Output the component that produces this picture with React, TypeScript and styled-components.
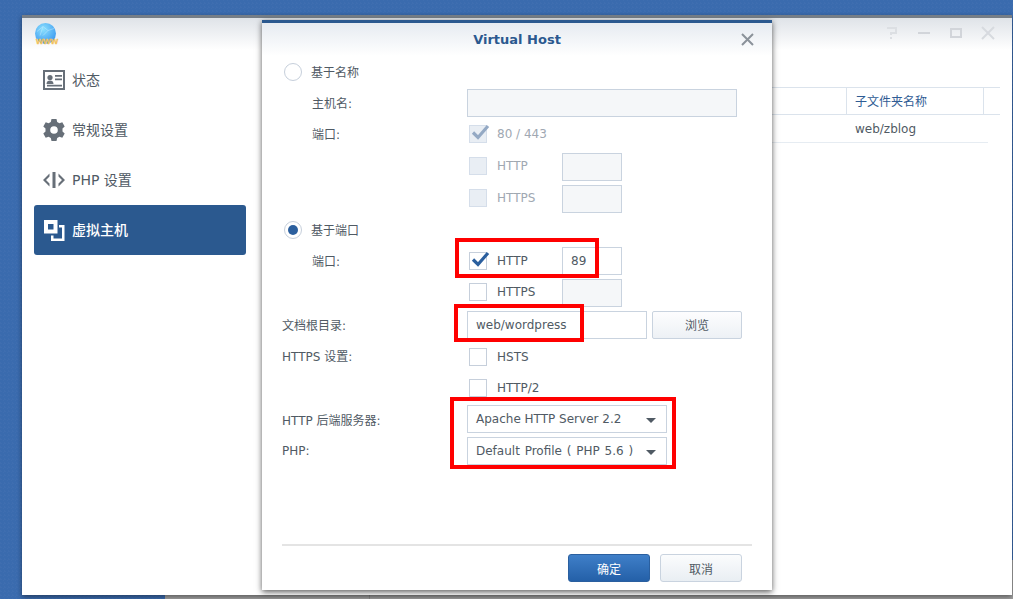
import React, { FC, ReactNode } from 'react'
import styled, { createGlobalStyle } from 'styled-components'

const FONT = `"DejaVu Sans", "Noto Sans CJK SC", sans-serif`

const GlobalStyle = createGlobalStyle`
  html, body {
    margin: 0;
    padding: 0;
    width: 1013px;
    height: 599px;
    overflow: hidden;
  }
  body {
    font-family: ${FONT};
    font-size: 12px;
    color: #505a64;
  }
  * {
    box-sizing: border-box;
  }
`

const Desktop = styled.div`
  position: relative;
  width: 1013px;
  height: 599px;
  overflow: hidden;
  background-color: #3a6bae;
  background-image: linear-gradient(45deg, rgba(255, 255, 255, 0.025) 25%, transparent 25%, transparent 75%, rgba(255, 255, 255, 0.025) 75%);
  background-size: 4px 4px;
`

/* 后面那个窗口，只露出底部一条 */
const BackWindow = styled.div`
  position: absolute;
  left: 165px;
  top: 560px;
  width: 848px;
  height: 39px;
  background: #a3a3a3;
  &::after {
    content: '';
    position: absolute;
    left: 204px;
    top: 0;
    bottom: 0;
    width: 1px;
    background: #8c8c8c;
  }
`

const Window = styled.div`
  position: absolute;
  left: 22px;
  top: 15px;
  width: 990px;
  height: 580px;
  background: #fff;
  border-top: 3px solid #767e87;
  box-shadow: 0 2px 5px rgba(0, 0, 0, 0.45);
  display: flex;
  flex-direction: column;
`

const TitleBar = styled.div`
  height: 32px;
  flex: none;
  display: flex;
  align-items: center;
  justify-content: space-between;
  padding: 0 12px;
  background: linear-gradient(#dfe3e8, #ffffff);
`

const TitleButtons = styled.div`
  display: flex;
  align-items: center;
  gap: 16px;
  margin-top: -3px;
  padding-right: 4px;
`

const WindowBody = styled.div`
  flex: 1;
  display: flex;
  min-height: 0;
`

const Sidebar = styled.nav`
  width: 240px;
  flex: none;
  padding: 5px 0 0 12px;
`

const NavItem = styled.div<{ $active?: boolean }>`
  width: 212px;
  height: 50px;
  display: flex;
  align-items: center;
  gap: 7px;
  padding-left: 9px;
  border-radius: 3px;
  font-size: 14px;
  color: ${(p) => (p.$active ? '#fff' : '#505a64')};
  background: ${(p) => (p.$active ? '#2b598f' : 'transparent')};
  font-weight: ${(p) => (p.$active ? 500 : 400)};
`

const NavText = styled.span`
  padding-bottom: 2px;
`

const NavIcon = styled.svg`
  width: 22px;
  height: 22px;
  flex: none;
`

const Main = styled.div`
  flex: 1;
  padding: 37px 0 0 0;
`

const Table = styled.div`
  width: 738px;
`

const TableHead = styled.div`
  height: 28px;
  display: flex;
  border-top: 1px solid #dbe3ec;
  border-bottom: 1px solid #dbe3ec;
  color: #2f5c94;
`

const TableRow = styled.div`
  height: 28px;
  width: 726px;
  display: flex;
  border-bottom: 1px solid #e6ecf2;
`

const Cell = styled.div<{ $width: number; $divider?: boolean }>`
  width: ${(p) => p.$width}px;
  flex: none;
  display: flex;
  align-items: center;
  padding-left: ${(p) => (p.$divider ? 8 : 0)}px;
  padding-bottom: ${(p) => (p.$divider ? 2 : 0)}px;
  border-right: ${(p) => (p.$divider ? '1px solid #dbe3ec' : 'none')};
`

const Spacer = styled.div<{ $width: number }>`
  width: ${(p) => p.$width}px;
  flex: none;
  border-right: 1px solid #dbe3ec;
`

/* 弹窗 */
const Dialog = styled.div`
  position: absolute;
  left: 262px;
  top: 20px;
  width: 510px;
  height: 570px;
  background: #fff;
  border-top: 3px solid #2b598f;
  box-shadow: 0 2px 6px rgba(0, 0, 0, 0.65);
  display: flex;
  flex-direction: column;
`

const DialogHead = styled.div`
  position: relative;
  height: 33px;
  flex: none;
  display: flex;
  align-items: center;
  justify-content: center;
  font-size: 13px;
  font-weight: 700;
  color: #2b598f;
  background: linear-gradient(#e6ebf1, #ffffff);
`

const CloseBtn = styled.svg`
  position: absolute;
  right: 18px;
  top: 10px;
  width: 13px;
  height: 13px;
`

const Form = styled.div`
  flex: 1;
  padding: 0 20px;
`

const Row = styled.div<{ $h?: number }>`
  height: ${(p) => p.$h ?? 32}px;
  display: grid;
  grid-template-columns: 185px 1fr;
  align-items: center;
`

const Label = styled.div<{ $indent?: boolean; $plain?: boolean }>`
  padding-left: ${(p) => (p.$indent ? 30 : 0)}px;
  padding-bottom: ${(p) => (p.$plain ? 0 : 2)}px;
`

const RadioLine = styled.div`
  display: flex;
  align-items: center;
  gap: 9px;
  margin-left: 2px;
`

const RadioText = styled.span`
  padding-bottom: 2px;
`

const Radio = styled.span<{ $checked?: boolean }>`
  width: 18px;
  height: 18px;
  border-radius: 50%;
  border: 1px solid #c6cfdb;
  background: #fff;
  flex: none;
  display: flex;
  align-items: center;
  justify-content: center;
  &::after {
    content: '';
    display: ${(p) => (p.$checked ? 'block' : 'none')};
    width: 10px;
    height: 10px;
    border-radius: 50%;
    background: #2b5f9e;
  }
`

const Field = styled.div`
  display: flex;
  align-items: center;
`

const CheckLine = styled.div<{ $disabled?: boolean }>`
  display: flex;
  align-items: center;
  width: 95px;
  padding-left: 2px;
  color: ${(p) => (p.$disabled ? '#a0a8b2' : '#505a64')};
  white-space: nowrap;
`

const Box = styled.span<{ $disabled?: boolean }>`
  position: relative;
  width: 18px;
  height: 18px;
  flex: none;
  margin-right: 10px;
  border: 1px solid ${(p) => (p.$disabled ? '#d5deea' : '#c6cfdb')};
  background: ${(p) => (p.$disabled ? '#e9eef4' : '#fff')};
`

const CheckMark = styled.svg`
  position: absolute;
  left: 1px;
  top: -3px;
  width: 19px;
  height: 18px;
`

const Input = styled.div<{ $width: number; $disabled?: boolean }>`
  width: ${(p) => p.$width}px;
  height: 28px;
  flex: none;
  display: flex;
  align-items: center;
  justify-content: space-between;
  padding: 0 8px;
  border: 1px solid #c9d3df;
  background: ${(p) => (p.$disabled ? '#f5f7f9' : '#fff')};
  white-space: nowrap;
`

const PortInput = styled(Input)`
  margin-top: 2px;
`

const ProfileName = styled.span`
  word-spacing: 1px;
`

const Caret = styled.span`
  width: 0;
  height: 0;
  flex: none;
  margin: 2px 2px 0 0;
  border-left: 5px solid transparent;
  border-right: 5px solid transparent;
  border-top: 5px solid #505a64;
`

const BrowseBtn = styled.div`
  width: 90px;
  height: 28px;
  margin-left: 5px;
  display: flex;
  align-items: center;
  justify-content: center;
  border: 1px solid #c9d3df;
  border-radius: 2px;
  background: linear-gradient(#fdfdfe, #edf1f5);
`

const Footer = styled.div`
  flex: none;
  height: 46px;
  margin: 0 20px;
  padding: 8px 10px 0 0;
  display: flex;
  justify-content: flex-end;
  gap: 10px;
  border-top: 2px solid #e4e4e4;
`

const Button = styled.div<{ $primary?: boolean }>`
  width: 82px;
  height: 28px;
  display: flex;
  align-items: center;
  justify-content: center;
  border-radius: 3px;
  border: 1px solid ${(p) => (p.$primary ? '#2a5f9f' : '#c9d3df')};
  color: ${(p) => (p.$primary ? '#fff' : '#505a64')};
  background: ${(p) => (p.$primary ? 'linear-gradient(#3f7fc8, #2460a8)' : 'linear-gradient(#fbfcfd, #e9eef3)')};
`

/* 截图上的红框标注 */
const Mark = styled.div<{ $x: number; $y: number; $w: number; $h: number }>`
  position: absolute;
  left: ${(p) => p.$x}px;
  top: ${(p) => p.$y}px;
  width: ${(p) => p.$w}px;
  height: ${(p) => p.$h}px;
  border: 4px solid #f00;
`

const GlobeIcon = () => (
  <svg width="26" height="26" viewBox="0 0 26 26">
    <defs>
      <radialGradient id="globe" cx="40%" cy="30%" r="75%">
        <stop offset="0%" stopColor="#8be0fd" />
        <stop offset="100%" stopColor="#3a97f0" />
      </radialGradient>
    </defs>
    <circle cx="11.500" cy="12.500" r="10.500" fill="url(#globe)" />
    <path d="M3 10.500l6-5 5 4 6-2M9 5.500l-3 9M14 9.500l-5 5" fill="none" stroke="#d4f1ff" strokeOpacity="0.6" strokeWidth="0.7" />
    <text x="13" y="23" textAnchor="middle" fontSize="9.500" fontWeight="700" fontFamily="Liberation Sans, sans-serif" fill="#f2c25c" stroke="#f2c25c" strokeWidth="0.3">
      www
    </text>
  </svg>
)

const StatusIcon = () => (
  <NavIcon viewBox="0 0 22 22">
    <path fillRule="evenodd" fill="#676f78" d="M0 1h22v20H0zM2 3v16h18V3z" />
    <circle cx="7" cy="8.500" r="2.600" fill="#676f78" />
    <path fill="#676f78" d="M3.500 15c0-2.500 1.500-3.500 3.500-3.500s3.500 1 3.500 3.500zM12 6h7v1.800h-7zM12 9.500h7v1.800h-7zM4 15.800h15v1.700H4z" />
  </NavIcon>
)

const GearIcon = () => (
  <NavIcon viewBox="0 0 22 22">
    <path
      fillRule="evenodd"
      fill="#676f78"
      d="M8.500 0h5l.7 3 2.200 1.200 2.900-1 2.400 4.300-2.200 2v3l2.200 2-2.400 4.300-2.900-1L14.200 19l-.7 3h-5l-.7-3-2.200-1.200-2.900 1L.3 14.500l2.200-2v-3l-2.200-2 2.400-4.300 2.900 1L7.800 3zM11 7.200a3.800 3.800 0 1 0 0 7.600 3.800 3.800 0 0 0 0-7.600z"
    />
  </NavIcon>
)

const CodeIcon = () => (
  <NavIcon viewBox="0 0 22 22">
    <path fill="#676f78" d="M6.500 4.500v3L3 11l3.500 3.500v3L0 11zM15.500 4.500v3L19 11l-3.500 3.500v3L22 11zM9.500 3h3v16h-3z" />
  </NavIcon>
)

const VhostIcon = () => (
  <NavIcon viewBox="0 0 22 22">
    <path fillRule="evenodd" fill="#fff" d="M1 1h13.500v13.500H1zM5 5v5.500h5.500V5z" />
    <path fill="#fff" d="M16 6h5.500v16H8v-5.500h2.500v3H19V8.500h-3z" />
  </NavIcon>
)

const Check: FC<{ color: string }> = ({ color }) => (
  <CheckMark viewBox="0 0 19 18">
    <path d="M2 9.500l5 5L17 3" fill="none" stroke={color} strokeWidth="3.200" />
  </CheckMark>
)

const CheckItem: FC<{ checked?: boolean; disabled?: boolean; children: ReactNode }> = ({ checked, disabled, children }) => (
  <CheckLine $disabled={disabled}>
    <Box $disabled={disabled}>{checked && <Check color={disabled ? '#94a9c4' : '#2b5f9e'} />}</Box>
    {children}
  </CheckLine>
)

export default function App() {
  return (
    <Desktop>
      <GlobalStyle />
      <BackWindow />
      <Window>
        <TitleBar>
          <GlobeIcon />
          <TitleButtons>
            <svg width="16" height="16" viewBox="0 0 16 16">
              <path d="M3 3h9v5H7v2M7 12v2" fill="none" stroke="#dcdfe3" strokeWidth="2" />
            </svg>
            <svg width="16" height="16" viewBox="0 0 16 16">
              <path d="M2 8h12" stroke="#d2d5da" strokeWidth="2" />
            </svg>
            <svg width="16" height="16" viewBox="0 0 16 16">
              <path d="M3 4h10v8H3z" fill="none" stroke="#d2d5da" strokeWidth="2" />
            </svg>
            <svg width="16" height="16" viewBox="0 0 16 16">
              <path d="M2 2l12 12M14 2L2 14" stroke="#d7dadf" strokeWidth="2" />
            </svg>
          </TitleButtons>
        </TitleBar>
        <WindowBody>
          <Sidebar>
            <NavItem>
              <StatusIcon />
              <NavText>状态</NavText>
            </NavItem>
            <NavItem>
              <GearIcon />
              <NavText>常规设置</NavText>
            </NavItem>
            <NavItem>
              <CodeIcon />
              <NavText>PHP 设置</NavText>
            </NavItem>
            <NavItem $active>
              <VhostIcon />
              <NavText>虚拟主机</NavText>
            </NavItem>
          </Sidebar>
          <Main>
            <Table>
              <TableHead>
                <Spacer $width={585} />
                <Cell $width={137} $divider>
                  子文件夹名称
                </Cell>
              </TableHead>
              <TableRow>
                <Cell $width={593} />
                <Cell $width={130}>web/zblog</Cell>
              </TableRow>
            </Table>
          </Main>
        </WindowBody>
      </Window>
      <Dialog>
        <DialogHead>
          Virtual Host
          <CloseBtn viewBox="0 0 13 13">
            <path d="M1 1l11 11M12 1L1 12" stroke="#8b929a" strokeWidth="2" />
          </CloseBtn>
        </DialogHead>
        <Form>
          <Row $h={32}>
            <RadioLine>
              <Radio />
              <RadioText>基于名称</RadioText>
            </RadioLine>
          </Row>
          <Row $h={30}>
            <Label $indent>主机名:</Label>
            <Field>
              <Input $width={270} $disabled />
            </Field>
          </Row>
          <Row $h={32}>
            <Label $indent>端口:</Label>
            <Field>
              <CheckItem checked disabled>
                80 / 443
              </CheckItem>
            </Field>
          </Row>
          <Row $h={32}>
            <span />
            <Field>
              <CheckItem disabled>HTTP</CheckItem>
              <PortInput $width={60} $disabled />
            </Field>
          </Row>
          <Row $h={32}>
            <span />
            <Field>
              <CheckItem disabled>HTTPS</CheckItem>
              <PortInput $width={60} $disabled />
            </Field>
          </Row>
          <Row $h={32}>
            <RadioLine>
              <Radio $checked />
              <RadioText>基于端口</RadioText>
            </RadioLine>
          </Row>
          <Row $h={30}>
            <Label $indent>端口:</Label>
            <Field>
              <CheckItem checked>HTTP</CheckItem>
              <Input $width={60}>89</Input>
            </Field>
          </Row>
          <Row $h={32}>
            <span />
            <Field>
              <CheckItem>HTTPS</CheckItem>
              <PortInput $width={60} $disabled />
            </Field>
          </Row>
          <Row $h={33}>
            <Label $plain>文档根目录:</Label>
            <Field>
              <Input $width={180}>web/wordpress</Input>
              <BrowseBtn>浏览</BrowseBtn>
            </Field>
          </Row>
          <Row $h={31}>
            <Label>HTTPS 设置:</Label>
            <Field>
              <CheckItem>HSTS</CheckItem>
            </Field>
          </Row>
          <Row $h={31}>
            <span />
            <Field>
              <CheckItem>HTTP/2</CheckItem>
            </Field>
          </Row>
          <Row $h={32}>
            <Label $plain>HTTP 后端服务器:</Label>
            <Field>
              <Input $width={200}>
                Apache HTTP Server 2.2
                <Caret />
              </Input>
            </Field>
          </Row>
          <Row $h={32}>
            <Label $plain>PHP:</Label>
            <Field>
              <Input $width={200}>
                <ProfileName>Default Profile ( PHP 5.6 )</ProfileName>
                <Caret />
              </Input>
            </Field>
          </Row>
        </Form>
        <Footer>
          <Button $primary>确定</Button>
          <Button>取消</Button>
        </Footer>
      </Dialog>
      <Mark $x={455} $y={238} $w={144} $h={40} />
      <Mark $x={454} $y={304} $w={130} $h={38} />
      <Mark $x={450} $y={397} $w={226} $h={72} />
    </Desktop>
  )
}
